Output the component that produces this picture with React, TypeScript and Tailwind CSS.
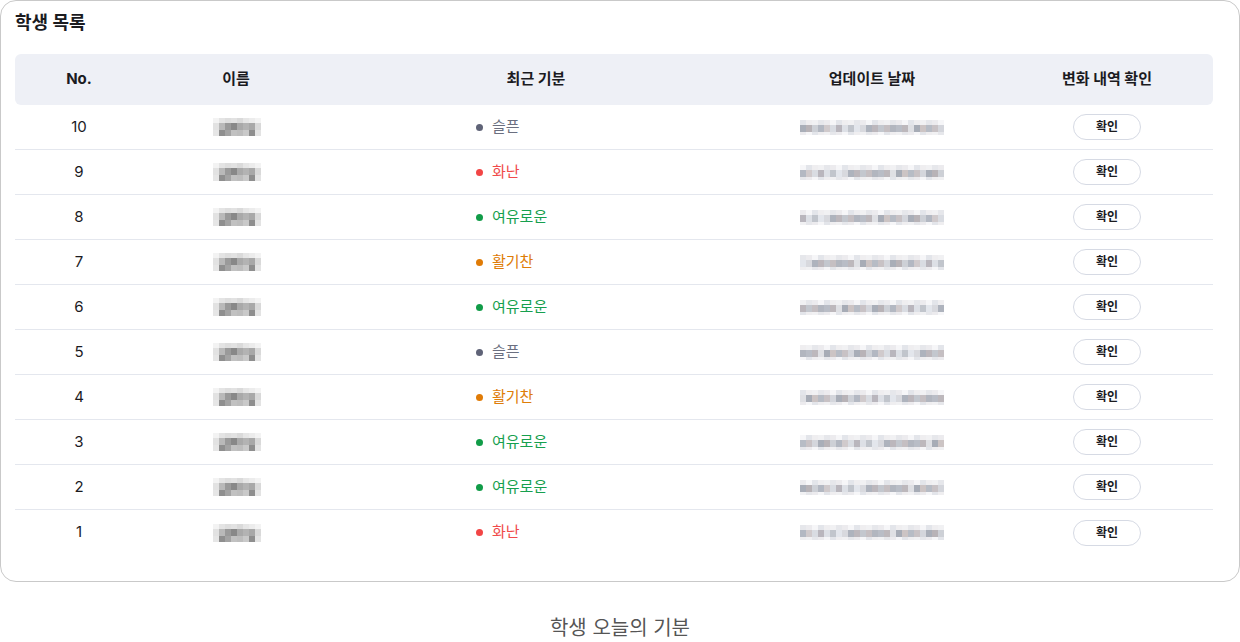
import React from "react";

const moodStyles: Record<string, { dot: string; text: string }> = {
  슬픈: { dot: "bg-[#5f6377]", text: "text-[#6b6f80]" },
  화난: { dot: "bg-[#f24545]", text: "text-[#f04a4a]" },
  여유로운: { dot: "bg-[#119c48]", text: "text-[#17a04f]" },
  활기찬: { dot: "bg-[#e07b06]", text: "text-[#de7d08]" },
};

const students = [
  { no: 10, mood: "슬픈" },
  { no: 9, mood: "화난" },
  { no: 8, mood: "여유로운" },
  { no: 7, mood: "활기찬" },
  { no: 6, mood: "여유로운" },
  { no: 5, mood: "슬픈" },
  { no: 4, mood: "활기찬" },
  { no: 3, mood: "여유로운" },
  { no: 2, mood: "여유로운" },
  { no: 1, mood: "화난" },
];

// 가려진 이름 (모자이크)
const nameRows = [
  { h: "h-[5px]", c: ["#f3f3f3", "#e4e4e4", "#dedede", "#e2e2e2", "#dadada", "#e6e6e6", "#ececec", "#f3f3f3"] },
  { h: "h-[7px]", c: ["#e2e2e2", "#b9b9b9", "#9a9a9a", "#888888", "#a9a9a9", "#b3b3b3", "#a8a8a8", "#d9d9d9"] },
  { h: "h-[6px]", c: ["#e6e6e6", "#8f8f8f", "#a3a3a3", "#c1c1c1", "#bdbdbd", "#c9c9c9", "#8e8e8e", "#e3e3e3"] },
];

const datePalette = [
  "#b9b6bd", "#c3c7ce", "#ccc4c4", "#b3b8c2", "#d8d9de", "#bdb8bc", "#a9aeb8", "#dde0e6",
  "#c5bfc2", "#b7bcc5", "#d0cacc", "#aeb3bd", "#dfe0e4", "#b8b3b7", "#c1c5cc", "#b2b6bf",
  "#c8c2c5", "#d9dce2", "#bcb7bc", "#a7acb6", "#cdd0d6", "#e3e6ec", "#b9bdc6", "#d4d6dc",
];
const dateLight = ["#f1f1f3", "#e6e7eb", "#ecebee", "#f6f6f8", "#e3e5ea", "#efeef0"];

function NameBlur() {
  return (
    <div className="flex flex-col">
      {nameRows.map((row, r) => (
        <div key={r} className="flex">
          {row.c.map((c, i) => (
            <div key={i} className={`w-[6px] ${row.h}`} style={{ backgroundColor: c }} />
          ))}
        </div>
      ))}
    </div>
  );
}

function DateBlur({ seed }: { seed: number }) {
  const rows = ["h-[5px]", "h-[7px]", "h-[3px]"];
  return (
    <div className="flex flex-col">
      {rows.map((h, r) => (
        <div key={r} className="flex">
          {datePalette.map((_, i) => {
            const color =
              r === 1
                ? datePalette[(i * 7 + seed * 3) % datePalette.length]
                : dateLight[(i + seed + r * 2) % dateLight.length];
            return <div key={i} className={`w-[6px] ${h}`} style={{ backgroundColor: color }} />;
          })}
        </div>
      ))}
    </div>
  );
}

export default function App() {
  return (
    <div className="bg-white min-h-screen font-['Inter','Noto_Sans_CJK_KR',sans-serif]">
      {/* 학생 목록 카드 */}
      <div className="w-[1240px] h-[582px] border border-[#c9c9c9] rounded-[16px] px-[14px] pt-[9px]">
        <h2 className="text-[18px] font-bold text-[#1b1b1f] leading-[26px] mb-[18px]">학생 목록</h2>

        <div className="w-[1198px]">
          <div className="grid grid-cols-[128px_186px_414px_258px_212px] h-[51px] items-center bg-[#eef0f6] rounded-[6px] text-[15px] font-bold text-[#1b1b1f]">
            <div className="text-center">No.</div>
            <div className="text-center">이름</div>
            <div className="text-center">최근 기분</div>
            <div className="text-center">업데이트 날짜</div>
            <div className="text-center">변화 내역 확인</div>
          </div>

          {students.map((s, idx) => {
            const m = moodStyles[s.mood];
            return (
              <div
                key={s.no}
                className={`grid grid-cols-[128px_186px_414px_258px_212px] h-[45px] items-center text-[15px] ${
                  idx < students.length - 1 ? "border-b border-[#e4e7ee]" : ""
                }`}
              >
                <div className="text-center text-[#1b1b1f]">{s.no}</div>
                <div className="flex justify-center pl-[2px]">
                  <NameBlur />
                </div>
                <div className="flex items-center gap-[9px] pl-[147px]">
                  <span className={`w-[7px] h-[7px] rounded-full ${m.dot}`} />
                  <span className={m.text}>{s.mood}</span>
                </div>
                <div className="flex justify-center">
                  <DateBlur seed={s.no} />
                </div>
                <div className="flex justify-center">
                  <button className="w-[68px] h-[26px] rounded-full border border-[#d6dae4] bg-white text-[12px] font-bold text-[#1b1b1f]">
                    확인
                  </button>
                </div>
              </div>
            );
          })}
        </div>
      </div>

      <p className="text-center text-[20px] text-[#555555] mt-[31px]">학생 오늘의 기분</p>
    </div>
  );
}
